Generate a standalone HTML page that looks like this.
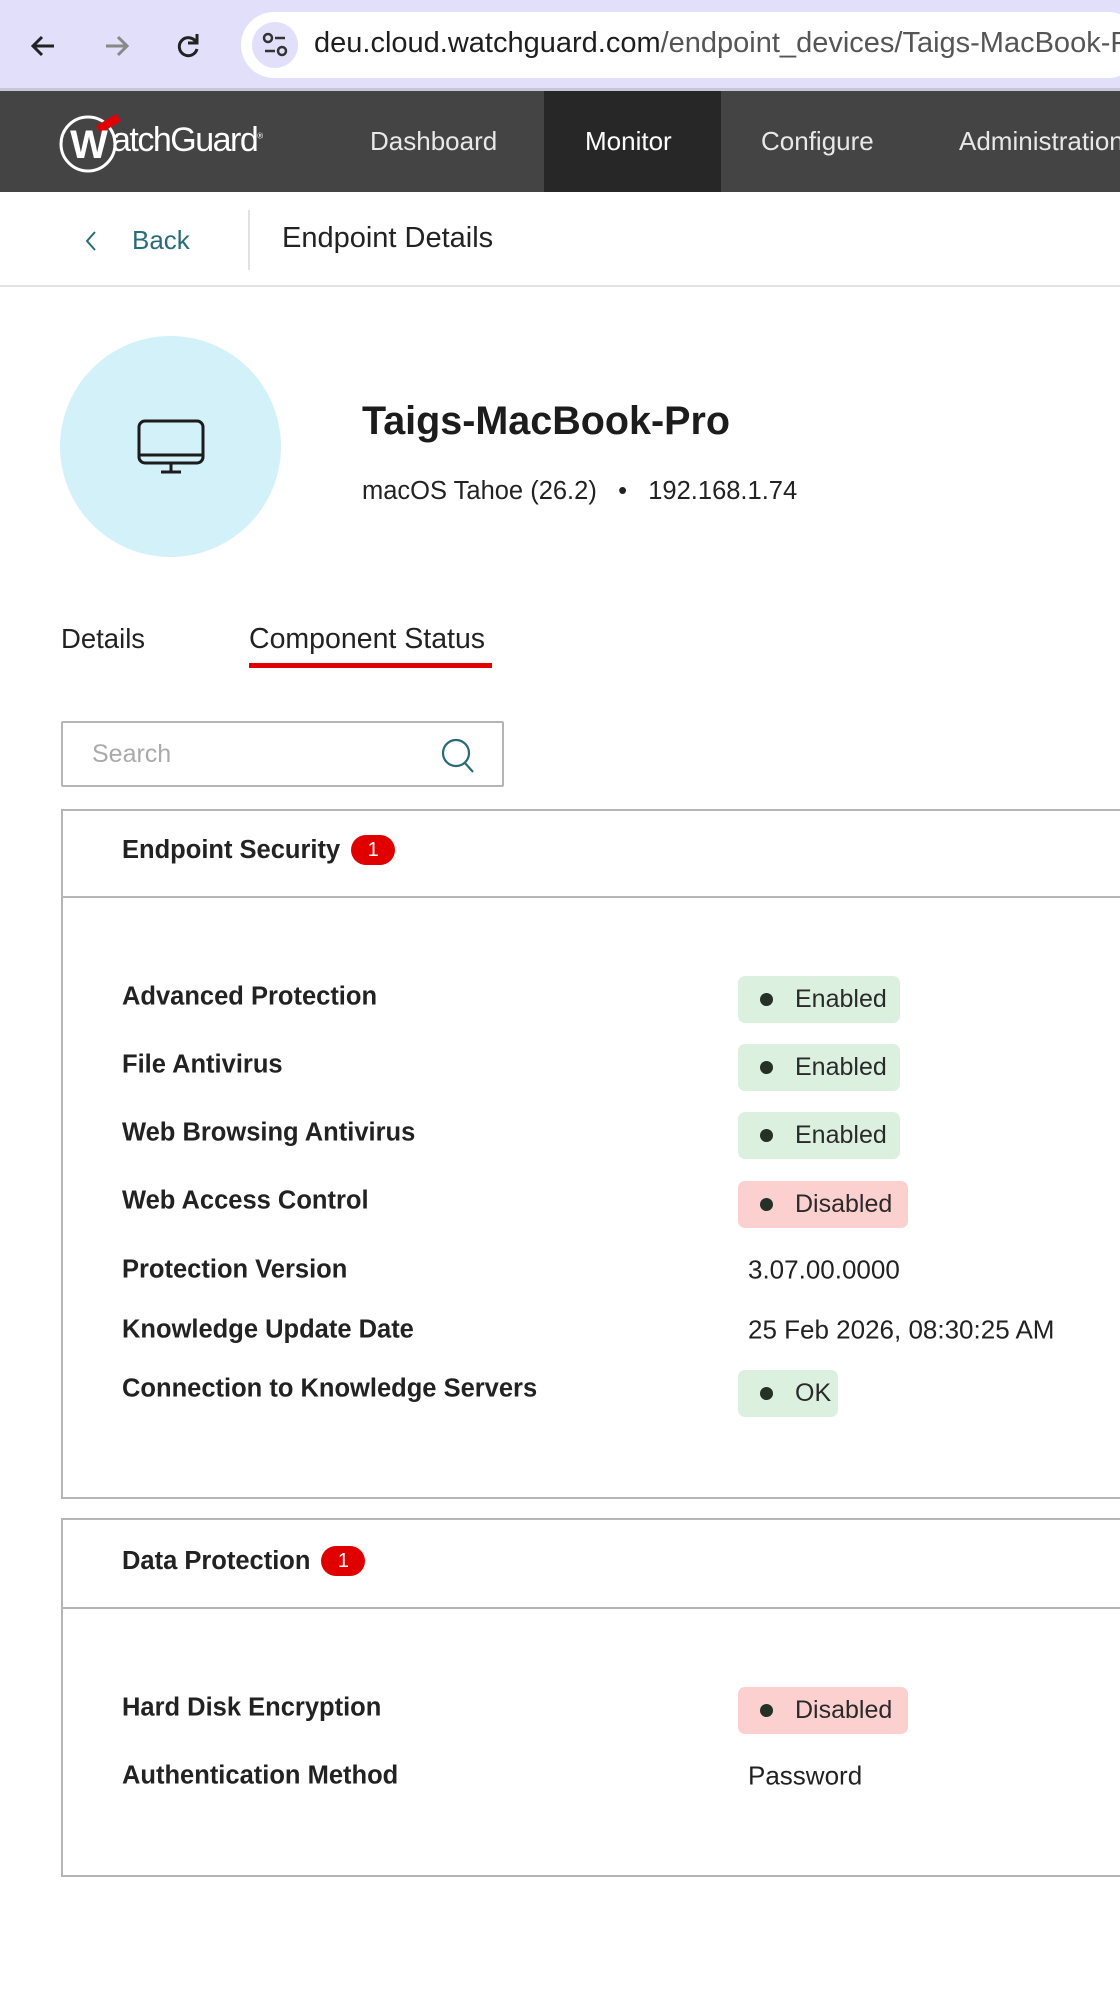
<!DOCTYPE html>
<html><head><meta charset="utf-8"><style>
*{margin:0;padding:0;box-sizing:border-box}
body{width:1120px;height:1990px;background:#fff;font-family:"Liberation Sans",sans-serif;color:#222;position:relative;overflow:hidden}
.a{position:absolute;white-space:nowrap}
.lbl{position:absolute;left:122px;font-size:25.5px;font-weight:bold;color:#222;transform:translateY(-50%)}
.val{position:absolute;left:748px;font-size:26px;color:#222;transform:translateY(-50%)}
.pill{position:absolute;left:738px;height:47px;border-radius:7px;font-size:25px;color:#2a2a2a;padding-left:57px;line-height:47px}
.pill:before{content:"";position:absolute;left:22px;top:17px;width:13px;height:13px;border-radius:50%;background:#253026}
.g{background:#dcf0e0;width:162px}
.r{background:#fdd0d0;width:170px}
.card{position:absolute;left:61px;width:1080px;border:2px solid #b5b5b5}
.hd{position:absolute;left:0;right:0;border-bottom:2px solid #b5b5b5}
.badge{display:inline-block;background:#e10000;color:#fff;font-weight:normal;font-size:20px;border-radius:15px;width:44px;height:30px;text-align:center;line-height:30px;margin-left:11px;vertical-align:2px}
</style></head><body>
<div class="a" style="left:0;top:0;width:1120px;height:91px;background:#e1dffa;border-bottom:3px solid #c7c6d8"></div>
<svg class="a" style="left:28px;top:30px" width="32" height="32" viewBox="0 0 32 32"><path d="M26 16H6M14 7l-9 9 9 9" stroke="#222" stroke-width="3" fill="none"/></svg>
<svg class="a" style="left:100px;top:30px" width="32" height="32" viewBox="0 0 32 32"><path d="M6 16h20M18 7l9 9-9 9" stroke="#888" stroke-width="3" fill="none"/></svg>
<svg class="a" style="left:172px;top:30px" width="32" height="32" viewBox="0 0 32 32"><path d="M24 12a9 9 0 1 0 1 7" stroke="#222" stroke-width="3" fill="none"/><path d="M25 4v9h-9" stroke="#222" stroke-width="3" fill="none"/></svg>
<div class="a" style="left:241px;top:12px;width:900px;height:66px;background:#fff;border-radius:33px"></div>
<div class="a" style="left:252px;top:22px;width:46px;height:46px;background:#e1dffa;border-radius:50%"></div>
<svg class="a" style="left:260px;top:31px" width="30" height="28" viewBox="0 0 30 28"><circle cx="8" cy="7" r="4" stroke="#333" stroke-width="2.5" fill="none"/><path d="M15 7h10M5 20h10" stroke="#333" stroke-width="2.5"/><circle cx="22" cy="20" r="4" stroke="#333" stroke-width="2.5" fill="none"/></svg>
<div class="a" style="left:314px;top:27px;font-size:29px;color:#1e1e1e">deu.cloud.watchguard.com<span style="color:#555">/endpoint_devices/Taigs-MacBook-Pro</span></div>
<div class="a" style="left:0;top:91px;width:1120px;height:101px;background:#444"></div>
<div class="a" style="left:544px;top:91px;width:177px;height:101px;background:#272727"></div>
<svg class="a" style="left:58px;top:108px" width="66" height="68" viewBox="0 0 66 68"><circle cx="30" cy="36" r="27" stroke="#fff" stroke-width="3" fill="none"/><path d="M38 18l20-12 5 7-20 12z" fill="#e10000"/><text x="31" y="50" text-anchor="middle" font-family="Liberation Sans" font-weight="bold" font-size="40" fill="#fff">W</text></svg>
<div class="a" style="left:112px;top:121px;font-size:34px;color:#fff;letter-spacing:-1.5px">atchGuard<sup style="font-size:8px">®</sup></div>
<div class="a" style="left:370px;top:126px;font-size:26px;color:#e8e8e8">Dashboard</div>
<div class="a" style="left:585px;top:126px;font-size:26px;color:#fff">Monitor</div>
<div class="a" style="left:761px;top:126px;font-size:26px;color:#e8e8e8">Configure</div>
<div class="a" style="left:959px;top:126px;font-size:26px;color:#e8e8e8">Administration</div>
<div class="a" style="left:0;top:285px;width:1120px;height:2px;background:#e2e2e2"></div>
<svg class="a" style="left:84px;top:230px" width="14" height="22" viewBox="0 0 14 22"><path d="M11 2L3 11l8 9" stroke="#2a6b78" stroke-width="2" fill="none"/></svg>
<div class="a" style="left:132px;top:225px;font-size:26px;color:#2a6b78">Back</div>
<div class="a" style="left:248px;top:210px;width:2px;height:60px;background:#e2e2e2"></div>
<div class="a" style="left:282px;top:222px;font-size:29px;color:#222">Endpoint Details</div>
<div class="a" style="left:60px;top:336px;width:221px;height:221px;border-radius:50%;background:#d3f1f8"></div>
<svg class="a" style="left:136px;top:418px" width="70" height="60" viewBox="0 0 70 60"><rect x="3" y="3" width="64" height="42" rx="6" stroke="#1c1c1c" stroke-width="3" fill="none"/><path d="M3 37h64M35 45v9M25 54h20" stroke="#1c1c1c" stroke-width="3"/></svg>
<div class="a" style="left:362px;top:399px;font-size:39.5px;font-weight:bold;color:#1c1c1c">Taigs-MacBook-Pro</div>
<div class="a" style="left:362px;top:477px;font-size:25.5px;color:#222">macOS Tahoe (26.2) &nbsp;&nbsp;•&nbsp;&nbsp; 192.168.1.74</div>
<div class="a" style="left:61px;top:623px;font-size:27.5px;color:#222">Details</div>
<div class="a" style="left:249px;top:623px;font-size:28.5px;color:#222">Component Status</div>
<div class="a" style="left:249px;top:663px;width:243px;height:5px;background:#e00000"></div>
<div class="a" style="left:61px;top:721px;width:443px;height:66px;border:2px solid #b5b5b5;border-radius:2px"></div>
<div class="a" style="left:92px;top:740px;font-size:25px;color:#aaa">Search</div>
<svg class="a" style="left:440px;top:737px" width="36" height="38" viewBox="0 0 36 38"><circle cx="16" cy="16" r="13" stroke="#2a6b78" stroke-width="2.2" fill="none"/><path d="M25 26l8 9" stroke="#2a6b78" stroke-width="2.2"/></svg>
<div class="card" style="top:809px;height:690px"><div class="hd" style="top:0;height:87px"></div></div>
<div class="a" style="left:122px;top:835px;font-size:25.5px;font-weight:bold">Endpoint Security<span class="badge">1</span></div>
<div class="lbl" style="top:997px">Advanced Protection</div>
<div class="pill g" style="top:976px">Enabled</div>
<div class="lbl" style="top:1065px">File Antivirus</div>
<div class="pill g" style="top:1044px">Enabled</div>
<div class="lbl" style="top:1133px">Web Browsing Antivirus</div>
<div class="pill g" style="top:1112px">Enabled</div>
<div class="lbl" style="top:1201px">Web Access Control</div>
<div class="pill r" style="top:1181px">Disabled</div>
<div class="lbl" style="top:1270px">Protection Version</div>
<div class="val" style="top:1270px">3.07.00.0000</div>
<div class="lbl" style="top:1330px">Knowledge Update Date</div>
<div class="val" style="top:1330px">25 Feb 2026, 08:30:25 AM</div>
<div class="lbl" style="top:1389px">Connection to Knowledge Servers</div>
<div class="pill g" style="top:1370px;width:100px">OK</div>
<div class="card" style="top:1518px;height:359px"><div class="hd" style="top:0;height:89px"></div></div>
<div class="a" style="left:122px;top:1546px;font-size:25.5px;font-weight:bold">Data Protection<span class="badge">1</span></div>
<div class="lbl" style="top:1708px">Hard Disk Encryption</div>
<div class="pill r" style="top:1687px">Disabled</div>
<div class="lbl" style="top:1776px">Authentication Method</div>
<div class="val" style="top:1776px">Password</div>
</body></html>
